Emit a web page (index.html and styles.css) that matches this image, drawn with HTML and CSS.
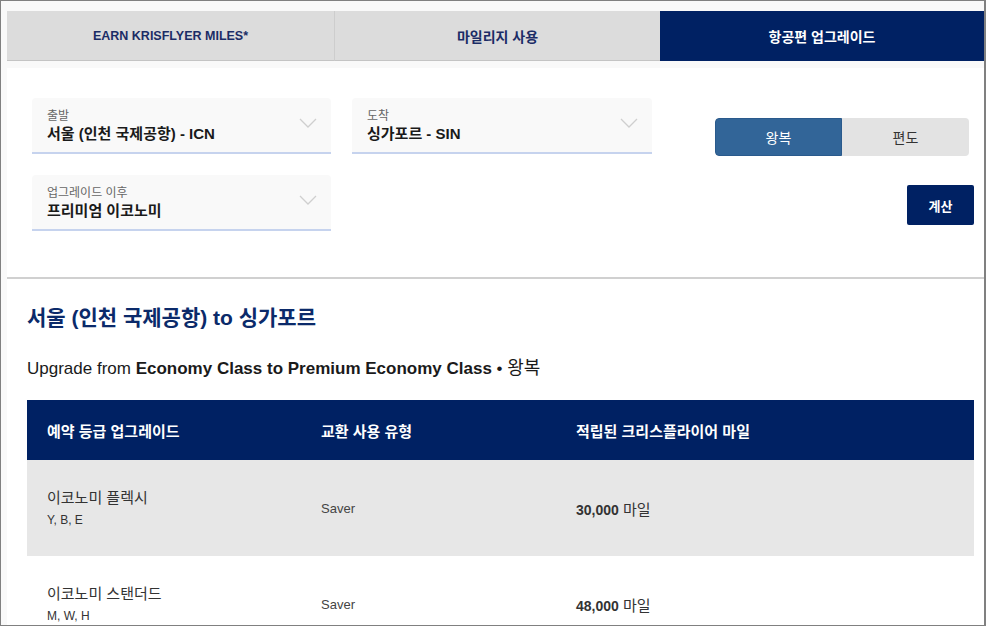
FILE: index.html
```html
<!DOCTYPE html>
<html lang="ko">
<head>
<meta charset="utf-8">
<link rel="stylesheet" href="styles.css">
</head>
<body>
<div class="frame">
  <div class="tabs">
    <div class="tab tab-latin">EARN KRISFLYER MILES*</div>
    <div class="tab tab-mid">마일리지 사용</div>
    <div class="tab tab-active">항공편 업그레이드</div>
  </div>
  <div class="content">
    <div class="form">
      <div class="form-row">
        <div class="field field-a">
          <div class="field-text">
            <div class="label">출발</div>
            <div class="value">서울 (인천 국제공항) - ICN</div>
          </div>
          <svg class="chev" width="18" height="10" viewBox="0 0 18 10"><polyline points="1,1 9,9 17,1" fill="none" stroke="#cfcfcf" stroke-width="1.3"/></svg>
        </div>
        <div class="field field-b">
          <div class="field-text">
            <div class="label">도착</div>
            <div class="value">싱가포르 - SIN</div>
          </div>
          <svg class="chev" width="18" height="10" viewBox="0 0 18 10"><polyline points="1,1 9,9 17,1" fill="none" stroke="#cfcfcf" stroke-width="1.3"/></svg>
        </div>
        <div class="toggle">
          <div class="opt opt-on">왕복</div>
          <div class="opt">편도</div>
        </div>
      </div>
      <div class="form-row row-two">
        <div class="field field-a">
          <div class="field-text">
            <div class="label">업그레이드 이후</div>
            <div class="value">프리미엄 이코노미</div>
          </div>
          <svg class="chev" width="18" height="10" viewBox="0 0 18 10"><polyline points="1,1 9,9 17,1" fill="none" stroke="#cfcfcf" stroke-width="1.3"/></svg>
        </div>
        <button class="calc">계산</button>
      </div>
    </div>
    <div class="divider"></div>
    <div class="results">
      <h2 class="route">서울 (인천 국제공항) to 싱가포르</h2>
      <p class="sub">Upgrade from <b>Economy Class to Premium Economy Class</b> • <span class="ko">왕복</span></p>
      <div class="table">
        <div class="trow thead">
          <div class="cell">예약 등급 업그레이드</div>
          <div class="cell">교환 사용 유형</div>
          <div class="cell">적립된 크리스플라이어 마일</div>
        </div>
        <div class="trow tr-grey">
          <div class="cell"><div class="cls">이코노미 플렉시</div><div class="codes">Y, B, E</div></div>
          <div class="cell saver">Saver</div>
          <div class="cell miles"><b>30,000</b> 마일</div>
        </div>
        <div class="trow">
          <div class="cell"><div class="cls">이코노미 스탠더드</div><div class="codes">M, W, H</div></div>
          <div class="cell saver">Saver</div>
          <div class="cell miles"><b>48,000</b> 마일</div>
        </div>
      </div>
    </div>
  </div>
</div>
</body>
</html>
```

FILE: styles.css
```css
* { box-sizing: border-box; }
html, body { margin: 0; padding: 0; }
body {
  font-family: "Liberation Sans", "Noto Sans CJK KR", sans-serif;
  color: #222;
  background: #fff;
}
.frame {
  width: 986px;
  height: 626px;
  border: 1px solid #808080;
  border-right-width: 2px;
  background: #f9f9f9;
  padding: 10px 0 0 6px;
  overflow: hidden;
}
.tabs {
  display: grid;
  grid-template-columns: 327px 326px 1fr;
  height: 50px;
}
.tab {
  background: #dcdcdc;
  border-bottom: 1px solid #c4c4c4;
  display: flex;
  align-items: center;
  justify-content: center;
  font-weight: bold;
  font-size: 14px;
  color: #1b2c66;
}
.tab-latin { font-size: 12.5px; }
.tab-mid { border-left: 1px solid #cdcdcd; }
.tab-active {
  background: #002163;
  color: #fff;
  border-bottom: none;
}
.content {
  margin-top: 7px;
  background: #fff;
  height: 560px;
}
.form {
  padding: 30px 10px 0 25px;
}
.form-row {
  display: flex;
  align-items: flex-start;
}
.row-two { margin-top: 19px; }
.field {
  height: 56px;
  background: #f9f9f9;
  border-radius: 4px 4px 0 0;
  border-bottom: 2px solid #c6d3ee;
  display: flex;
  align-items: center;
  padding: 0 14px 0 15px;
}
.field-a { width: 299px; }
.field-b { width: 300px; margin-left: 21px; }
.field-text { flex: 1; padding-top: 2px; }
.label {
  font-size: 12px;
  color: #666;
  line-height: 15px;
}
.value {
  font-size: 15px;
  font-weight: bold;
  color: #1a1a1a;
  line-height: 20px;
}
.chev { margin-top: -4px; }
.toggle {
  margin-left: auto;
  margin-right: 5px;
  margin-top: 20px;
  width: 254px;
  height: 38px;
  display: flex;
  border-radius: 4px;
  overflow: hidden;
  background: #e3e3e3;
}
.opt {
  flex: 1;
  display: flex;
  align-items: center;
  justify-content: center;
  font-size: 14px;
  color: #333;
}
.opt-on {
  flex: 0 0 127px;
  background: #326598;
  color: #fff;
  border: 1px solid #2a5a8c;
  border-radius: 4px 0 0 4px;
}
.calc {
  margin-left: auto;
  margin-top: 10px;
  width: 67px;
  height: 40px;
  background: #002163;
  color: #fff;
  border: none;
  border-radius: 2px;
  font-family: inherit;
  font-weight: bold;
  font-size: 13px;
  padding: 0;
}
.divider {
  margin-top: 46px;
  height: 2px;
  background: #d0d0d0;
}
.results {
  padding: 24px 10px 0 20px;
}
.route {
  margin: 0;
  font-size: 21px;
  line-height: 30px;
  font-weight: bold;
  color: #0b2a6a;
}
.sub {
  margin: 22px 0 0;
  font-size: 17px;
  line-height: 26px;
  color: #1a1a1a;
}
.sub .ko { font-size: 18px; }
.table { margin-top: 18px; }
.trow {
  display: grid;
  grid-template-columns: 274px 255px 1fr;
  height: 96px;
  align-items: center;
}
.thead {
  height: 60px;
  background: #002163;
  color: #fff;
  font-weight: bold;
  font-size: 15px;
}
.tr-grey { background: #e7e7e7; }
.cell { padding-left: 20px; }
.cls { font-size: 15px; color: #333; line-height: 20px; }
.codes { font-size: 12px; color: #333; line-height: 16px; margin-top: 4px; }
.saver { font-size: 13px; color: #444; }
.miles { font-size: 15px; color: #333; }
.miles b { font-size: 14px; }
```
